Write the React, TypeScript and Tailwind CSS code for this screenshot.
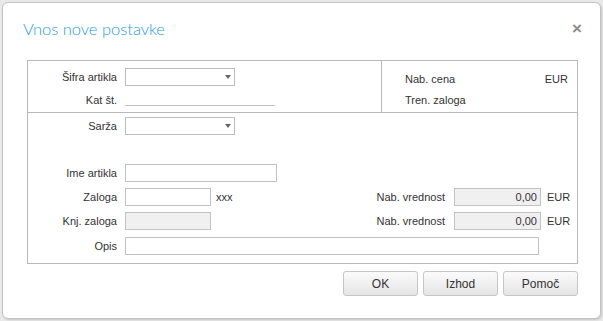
import type { ReactNode } from "react";

const font = { fontFamily: '"Liberation Sans", Arial, sans-serif' };

function Label({ children }: { children: ReactNode }) {
  return <span className="w-[89px] shrink-0 text-right text-[#333]">{children}</span>;
}

function Select() {
  return (
    <div className="ml-[8px] flex h-[18px] w-[110px] items-center justify-end border border-[#bdbdbd] bg-white pr-[3px]">
      <span className="h-0 w-0 border-x-[3.5px] border-t-[4px] border-x-transparent border-t-[#666]" />
    </div>
  );
}

function Input({ w, gray, value }: { w: string; gray?: boolean; value?: string }) {
  return (
    <div
      className={`flex h-[18px] items-center justify-end border border-[#c2c2c2] pr-[3px] text-[#333] ${w} ${
        gray ? "bg-[#f0f0f0]" : "bg-white"
      }`}
    >
      {value}
    </div>
  );
}

function Button({ children }: { children: ReactNode }) {
  return (
    <button className="flex h-[25px] w-[75px] items-center justify-center rounded-[3px] border border-[#c6c6c6] bg-gradient-to-b from-[#fbfbfb] to-[#e5e5e5] text-[12px] text-[#333]">
      {children}
    </button>
  );
}

export default function App() {
  return (
    <div className="h-[321px] w-[603px] bg-[#e9e9e9] p-[2px] text-[11px]" style={font}>
      <div className="relative h-[317px] w-[599px] rounded-[6px] border border-[#c3c3c3] bg-white shadow-[1px_1px_2px_rgba(0,0,0,0.15)]">
        <div className="flex items-center justify-between pl-[20px] pr-[18px] pt-[16px]">
          <span
            className="text-[16.5px] font-light leading-[20px] text-[#1f9de0]"
            style={{ fontFamily: 'Lato, "Open Sans", sans-serif' }}
          >
            Vnos nove postavke
          </span>
          <span className="text-[17px] font-bold leading-[16px] text-[#8c8c8c]">×</span>
        </div>

        <div className="ml-[24px] mt-[21px] w-[551px]">
          {/* top block */}
          <div className="flex h-[53px] border border-[#b9b9b9]">
            <div className="flex w-[354px] flex-col border-r border-[#b9b9b9] pt-[7px]">
              <div className="flex h-[18px] items-center">
                <Label>Šifra artikla</Label>
                <Select />
              </div>
              <div className="mt-[5px] flex h-[18px] items-center">
                <Label>Kat št.</Label>
                <div className="ml-[8px] mt-[10px] h-px w-[150px] bg-[#c2c2c2]" />
              </div>
            </div>
            <div className="flex flex-1 flex-col pl-[23px] pr-[9px] pt-[10px] text-[#333]">
              <div className="flex h-[16px] items-center justify-between">
                <span>Nab. cena</span>
                <span>EUR</span>
              </div>
              <div className="mt-[5px] flex h-[16px] items-center">
                <span>Tren. zaloga</span>
              </div>
            </div>
          </div>

          {/* lower block */}
          <div className="h-[151px] border-x border-b border-[#b9b9b9] pt-[4px]">
            <div className="flex h-[18px] items-center">
              <Label>Sarža</Label>
              <Select />
            </div>

            <div className="mt-[29px] flex h-[18px] items-center">
              <Label>Ime artikla</Label>
              <div className="ml-[8px]">
                <Input w="w-[152px]" />
              </div>
            </div>

            <div className="mt-[6px] flex h-[18px] items-center">
              <Label>Zaloga</Label>
              <div className="ml-[8px]">
                <Input w="w-[86px]" />
              </div>
              <span className="ml-[5px] text-[#333]">xxx</span>
              <div className="ml-auto flex items-center">
                <span className="text-[#333]">Nab. vrednost</span>
                <div className="ml-[9px]">
                  <Input w="w-[87px]" gray value="0,00" />
                </div>
                <span className="ml-[6px] w-[30px] text-[#333]">EUR</span>
              </div>
            </div>

            <div className="mt-[6px] flex h-[18px] items-center">
              <Label>Knj. zaloga</Label>
              <div className="ml-[8px]">
                <Input w="w-[86px]" gray />
              </div>
              <div className="ml-auto flex items-center">
                <span className="text-[#333]">Nab. vrednost</span>
                <div className="ml-[9px]">
                  <Input w="w-[87px]" gray value="0,00" />
                </div>
                <span className="ml-[6px] w-[30px] text-[#333]">EUR</span>
              </div>
            </div>

            <div className="mt-[7px] flex h-[18px] items-center">
              <Label>Opis</Label>
              <div className="ml-[8px]">
                <Input w="w-[414px]" />
              </div>
            </div>
          </div>

          <div className="mt-[7px] flex justify-end gap-[5px]">
            <Button>OK</Button>
            <Button>Izhod</Button>
            <Button>Pomoč</Button>
          </div>
        </div>
      </div>
    </div>
  );
}
